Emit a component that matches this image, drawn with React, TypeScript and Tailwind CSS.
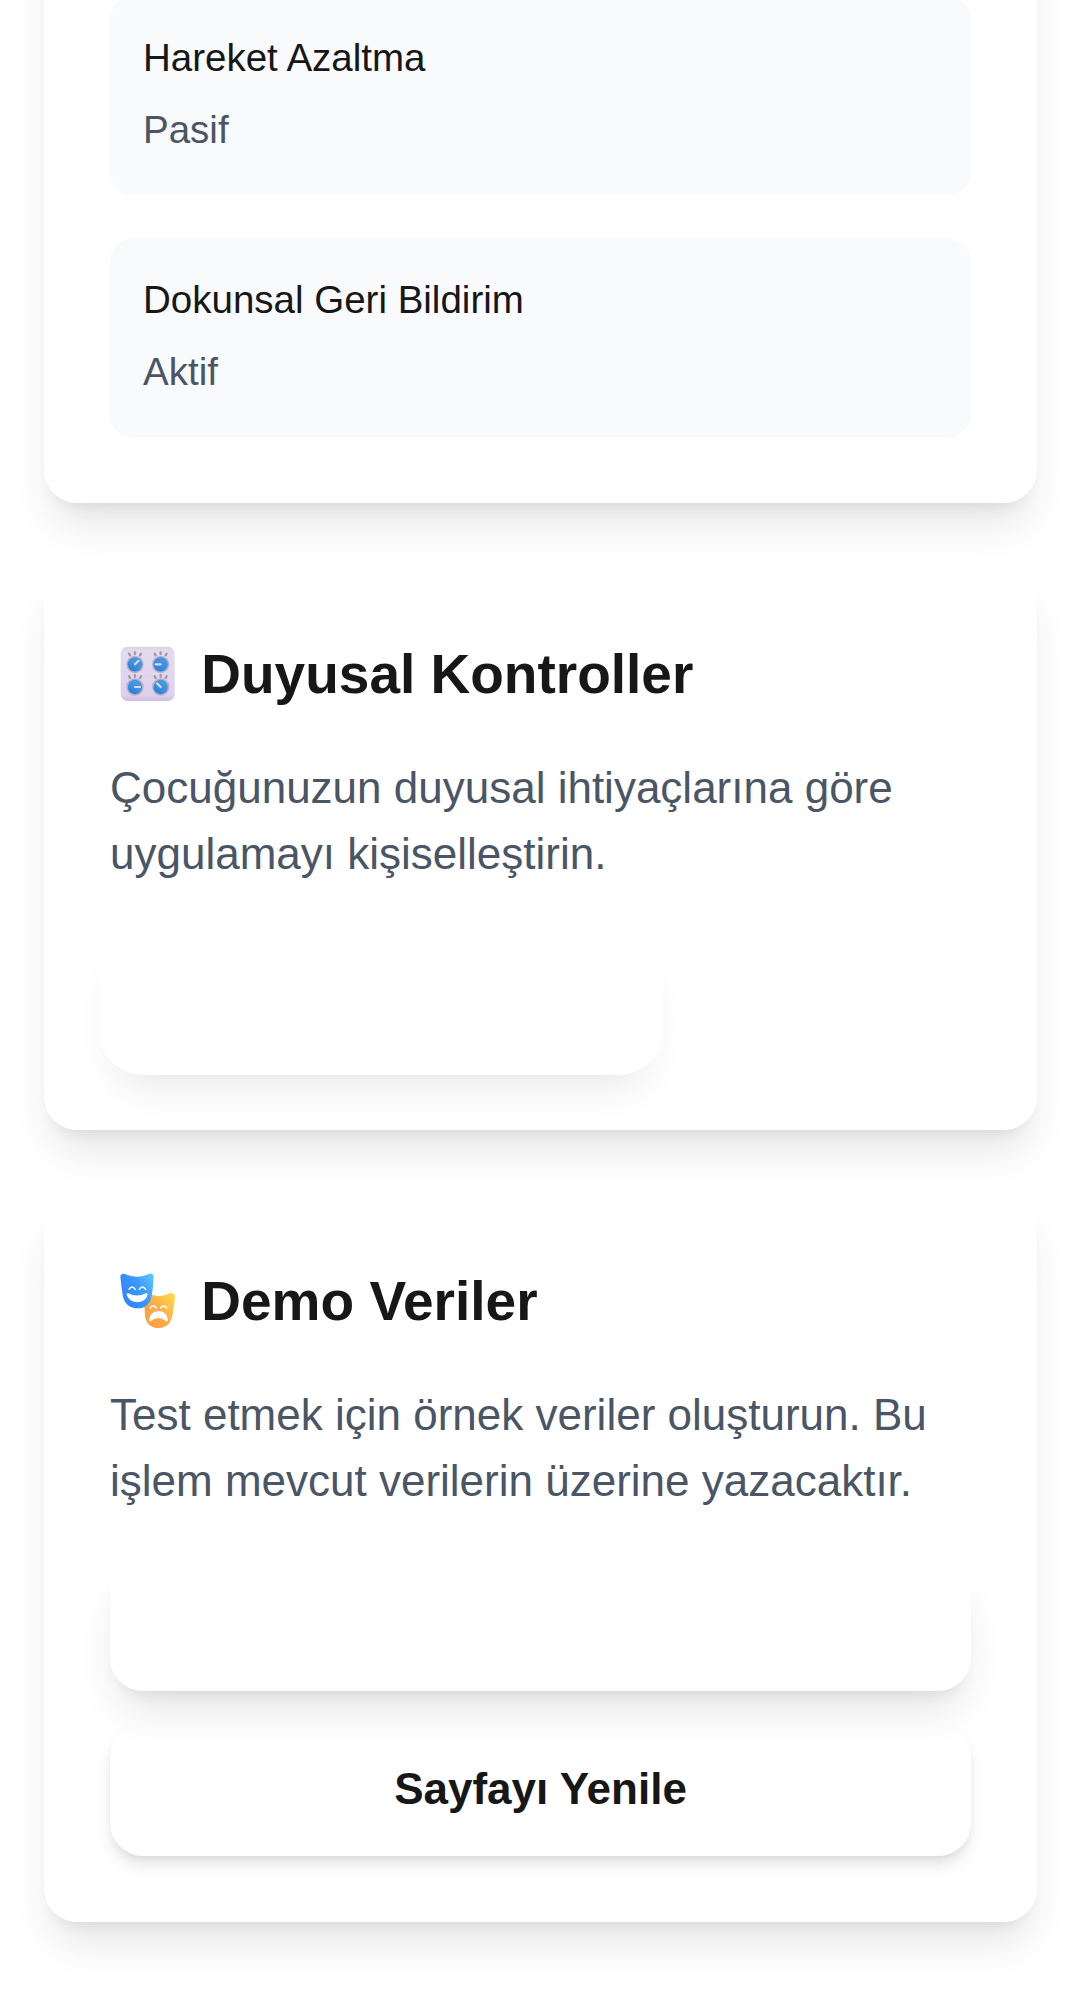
import type { ReactNode } from "react";

const cardShadow =
  "shadow-[0_27.5px_41.25px_-8.25px_rgb(0_0_0/0.1),0_11px_16.5px_-11px_rgb(0_0_0/0.1)]";

function Knob({ x, y, angle }: { x: number; y: number; angle: number }) {
  return (
    <g transform={`translate(${x} ${y})`}>
      <g stroke="#a39aa6" strokeWidth="7" strokeLinecap="round">
        <path d="M0 -36v5" />
        <path d="M-18 -32l3 5" />
        <path d="M18 -32l-3 5" />
      </g>
      <circle r="26" fill="#b9afc4" />
      <circle r="21.5" fill="url(#knob)" />
      <path
        d="M0 0H15"
        transform={`rotate(${angle})`}
        stroke="#dcd8f0"
        strokeWidth="6.5"
        strokeLinecap="round"
      />
    </g>
  );
}

function KnobsIcon() {
  return (
    <svg viewBox="60 47 165 165" className="size-[55px] shrink-0" aria-hidden="true">
      <defs>
        <linearGradient id="panel" x1="0" y1="0" x2="0" y2="1">
          <stop offset="0" stopColor="#d9d2e2" />
          <stop offset="0.08" stopColor="#e4dced" />
          <stop offset="0.9" stopColor="#dfd0ee" />
          <stop offset="1" stopColor="#cdbcdf" />
        </linearGradient>
        <linearGradient id="knob" x1="0.8" y1="0" x2="0.2" y2="1">
          <stop offset="0" stopColor="#4b9be0" />
          <stop offset="0.55" stopColor="#3a91e0" />
          <stop offset="1" stopColor="#2a78cc" />
        </linearGradient>
      </defs>
      <rect x="62" y="49" width="162" height="163" rx="21" fill="url(#panel)" />
      <Knob x={105} y={102} angle={-45} />
      <Knob x={182} y={102} angle={180} />
      <Knob x={105} y={170} angle={0} />
      <Knob x={182} y={170} angle={225} />
    </svg>
  );
}

function MasksIcon() {
  return (
    <svg viewBox="60 53 165 165" className="size-[55px] shrink-0" aria-hidden="true">
      <defs>
        <linearGradient id="happy" x1="0.2" y1="0.6" x2="1" y2="0.1">
          <stop offset="0" stopColor="#3487fb" />
          <stop offset="0.5" stopColor="#3c9bfd" />
          <stop offset="1" stopColor="#5cc8fb" />
        </linearGradient>
        <linearGradient id="sad" x1="0.1" y1="0.9" x2="1" y2="0.1">
          <stop offset="0" stopColor="#fb9d45" />
          <stop offset="0.5" stopColor="#fdae48" />
          <stop offset="1" stopColor="#fddb4c" />
        </linearGradient>
      </defs>
      <path
        d="M131 122Q131 112 141 113Q176 132 211 113Q224 112 225 123Q223 150 218 177Q211 218 176 218Q141 218 135 181Z"
        fill="url(#sad)"
      />
      <path
        d="M61 64Q62 54 72 55Q76 55 80 58Q111 70 142 58Q148 53 156 55Q162 58 161 67Q160 94 155 121Q148 159 111 159Q75 158 68 119Q64 92 61 64Z"
        fill="url(#happy)"
      />
      <g fill="none" stroke="#fff" strokeWidth="4.5" strokeLinecap="round">
        <path d="M87 102Q96 88 106 102" />
        <path d="M118 102Q127 88 137 102" />
        <path d="M151 158Q160 146 169 158" />
        <path d="M182 158Q191 146 200 158" />
      </g>
      <path
        d="M80 117Q80 112 85 114Q111 127 137 114Q143 112 143 117Q140 139 112 141Q84 139 80 117Z"
        fill="#fff"
      />
      <path
        d="M147 195Q150 168 175 167Q200 167 204 194Q204 201 198 197Q175 179 153 197Q147 201 147 195Z"
        fill="#fff"
      />
    </svg>
  );
}

function Card({ children, className = "" }: { children: ReactNode; className?: string }) {
  return (
    <section className={`rounded-[33px] bg-white px-[66px] pb-[66px] ${cardShadow} ${className}`}>
      {children}
    </section>
  );
}

function Setting({ label, value }: { label: string; value: string }) {
  return (
    <div className="h-[198px] rounded-[22px] bg-gray-50 p-[33px] text-[38.5px]">
      <p className="leading-[55px]">{label}</p>
      <p className="mt-[12px] leading-[66px] text-gray-600">{value}</p>
    </div>
  );
}

function CardHeading({ icon, title }: { icon: ReactNode; title: string }) {
  return (
    <h2 className="flex h-[77px] items-center gap-[26.3px] pl-[10px] text-[55px] font-bold leading-[77px]">
      {icon}
      <span className="pt-[2px]">{title}</span>
    </h2>
  );
}

export default function App() {
  return (
    <main className="flex h-[1999px] w-full flex-col gap-[66px] overflow-hidden bg-white px-[44px] font-['Liberation_Sans',Arial,sans-serif] text-[#171717]">
      <Card className="-mt-[200px] pt-[197px]">
        <div className="flex flex-col gap-[44px]">
          <Setting label="Hareket Azaltma" value="Pasif" />
          <Setting label="Dokunsal Geri Bildirim" value="Aktif" />
        </div>
      </Card>

      <Card className="pt-[66px]">
        <CardHeading icon={<KnobsIcon />} title="Duyusal Kontroller" />
        <p className="mt-[43px] text-[44px] leading-[66px] text-gray-600">
          Çocuğunuzun duyusal ihtiyaçlarına göre uygulamayı kişiselleştirin.
        </p>
        <button
          aria-label="Duyusal Kontroller"
          className="mt-[45px] block h-[132px] w-[542px] rounded-[33px] bg-white shadow-[0_0_0_11px_#fff,0_27.5px_41.25px_-8.25px_rgb(0_0_0/0.1),0_11px_16.5px_-11px_rgb(0_0_0/0.1)]"
        />
      </Card>

      <Card className="pt-[66px]">
        <CardHeading icon={<MasksIcon />} title="Demo Veriler" />
        <p className="mt-[43px] text-[44px] leading-[66px] text-gray-600">
          Test etmek için örnek veriler oluşturun. Bu işlem mevcut verilerin üzerine yazacaktır.
        </p>
        <div className="mt-[45px] flex flex-col gap-[33px]">
          <button aria-label="Demo Veriler" className={`h-[132px] rounded-[33px] ${cardShadow}`} />
          <button className="h-[132px] rounded-[33px] pb-[2px] text-[44px] font-bold leading-[66px] shadow-[0_11px_16.5px_-2.75px_rgb(0_0_0/0.1),0_5.5px_11px_-5.5px_rgb(0_0_0/0.1)]">
            Sayfayı Yenile
          </button>
        </div>
      </Card>
    </main>
  );
}
